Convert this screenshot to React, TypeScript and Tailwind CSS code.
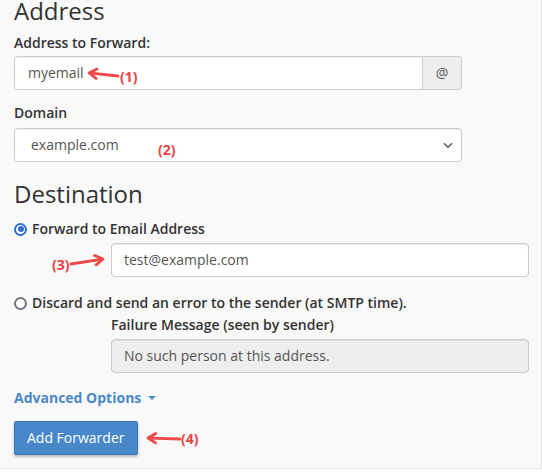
import React from "react";

const RED = "#ef4848";

function Arrow({ x1, y1, x2, y2 }: { x1: number; y1: number; x2: number; y2: number }) {
  const minX = Math.min(x1, x2) - 10;
  const minY = Math.min(y1, y2) - 10;
  const w = Math.abs(x2 - x1) + 20;
  const h = Math.abs(y2 - y1) + 20;
  const tx = x1 - minX;
  const ty = y1 - minY;
  const sx = x2 - minX;
  const sy = y2 - minY;
  const ang = Math.atan2(sy - ty, sx - tx);
  const len = 9;
  const spread = 0.55;
  const b1x = tx + len * Math.cos(ang + spread);
  const b1y = ty + len * Math.sin(ang + spread);
  const b2x = tx + len * Math.cos(ang - spread);
  const b2y = ty + len * Math.sin(ang - spread);
  return (
    <svg
      className="absolute pointer-events-none"
      style={{ left: minX, top: minY }}
      width={w}
      height={h}
      viewBox={`0 0 ${w} ${h}`}
    >
      <line x1={tx + 2 * Math.cos(ang)} y1={ty + 2 * Math.sin(ang)} x2={sx} y2={sy} stroke={RED} strokeWidth={2.8} strokeLinecap="round" />
      <path
        d={`M${b1x} ${b1y} L${tx} ${ty} L${b2x} ${b2y}`}
        fill="none"
        stroke={RED}
        strokeWidth={2.8}
        strokeLinecap="round"
        strokeLinejoin="round"
      />
    </svg>
  );
}

function Note({ text, left, top }: { text: string; left: number; top: number }) {
  return (
    <span
      className="absolute text-[14px] leading-[20px] font-bold text-[#e94343]"
      style={{ left, top }}
    >
      {text}
    </span>
  );
}

function Radio({ checked }: { checked: boolean }) {
  return checked ? (
    <span className="w-[13px] h-[13px] rounded-full border-2 border-[#2f6fd6] bg-white flex items-center justify-center shrink-0">
      <span className="w-[6px] h-[6px] rounded-full bg-[#2f6fd6]" />
    </span>
  ) : (
    <span className="w-[13px] h-[13px] rounded-full border-2 border-[#737380] bg-white shrink-0" />
  );
}

export default function App() {
  return (
    <div className="relative w-[542px] h-[469px] bg-[#f9f9f9] border-r border-b border-[#e3e3e3] flex flex-col pl-[14px] font-['Open_Sans',sans-serif] text-[#333] text-[14px] leading-[20px]">
      <h2 className="text-[24px] leading-[28px] font-normal -mt-[3px]">Address</h2>

      <label className="mt-[8px] font-semibold">Address to Forward:</label>
      <div className="mt-[3px] flex w-[448px] h-[34px]">
        <div className="flex-1 bg-white border border-[#ccc] rounded-l-[4px] shadow-[inset_0_1px_1px_rgba(0,0,0,0.075)] flex items-center pl-[13px] text-[#555]">
          myemail
        </div>
        <div className="w-[39px] bg-[#eee] border border-l-0 border-[#ccc] rounded-r-[4px] flex items-center justify-center text-[#555]">
          @
        </div>
      </div>

      <label className="mt-[13px] font-semibold">Domain</label>
      <div className="mt-[5px] w-[448px] h-[34px] bg-white border border-[#ccc] rounded-[4px] shadow-[inset_0_1px_1px_rgba(0,0,0,0.075)] flex items-center justify-between pl-[16px] pr-[8px] text-[#555]">
        <span>example.com</span>
        <svg width="10" height="7" viewBox="0 0 10 7">
          <path d="M1 1.2 L5 5.2 L9 1.2" fill="none" stroke="#555" strokeWidth="1.5" />
        </svg>
      </div>

      <h2 className="mt-[18px] text-[24px] leading-[28px] font-normal">Destination</h2>

      <div className="mt-[11px] flex items-center gap-[5px] font-semibold">
        <Radio checked />
        <span>Forward to Email Address</span>
      </div>
      <div className="mt-[4px] ml-[97px] w-[418px] h-[34px] bg-white border border-[#ccc] rounded-[4px] shadow-[inset_0_1px_1px_rgba(0,0,0,0.075)] flex items-center pl-[12px] text-[#555]">
        test@example.com
      </div>

      <div className="mt-[16px] flex items-center gap-[5px] font-semibold">
        <Radio checked={false} />
        <span>Discard and send an error to the sender (at SMTP time).</span>
      </div>
      <label className="mt-[2px] ml-[97px] font-semibold">Failure Message (seen by sender)</label>
      <div className="mt-[4px] ml-[97px] w-[418px] h-[34px] bg-[#eee] border border-[#ccc] rounded-[4px] shadow-[inset_0_1px_1px_rgba(0,0,0,0.075)] flex items-center pl-[12px] text-[#555]">
        No such person at this address.
      </div>

      <div className="mt-[15px] flex items-center gap-[7px] font-bold text-[#4a88c8]">
        <span>Advanced Options</span>
        <svg width="8" height="5" viewBox="0 0 8 5">
          <path d="M0 0 L8 0 L4 4 Z" fill="#4a88c8" />
        </svg>
      </div>

      <button className="mt-[13px] self-start h-[34px] px-[12px] bg-[#4787ca] border border-[#3a76b5] rounded-[2px] text-white shadow-[0_2px_3px_rgba(0,0,0,0.25)]">
        Add Forwarder
      </button>

      <Arrow x1={89} y1={73} x2={118} y2={76} />
      <Note text="(1)" left={120} top={67} />
      <Note text="(2)" left={158} top={140} />
      <Arrow x1={103} y1={259} x2={71} y2={264} />
      <Note text="(3)" left={52} top={255} />
      <Arrow x1={148} y1={438} x2={180} y2={439} />
      <Note text="(4)" left={181} top={429} />
    </div>
  );
}
